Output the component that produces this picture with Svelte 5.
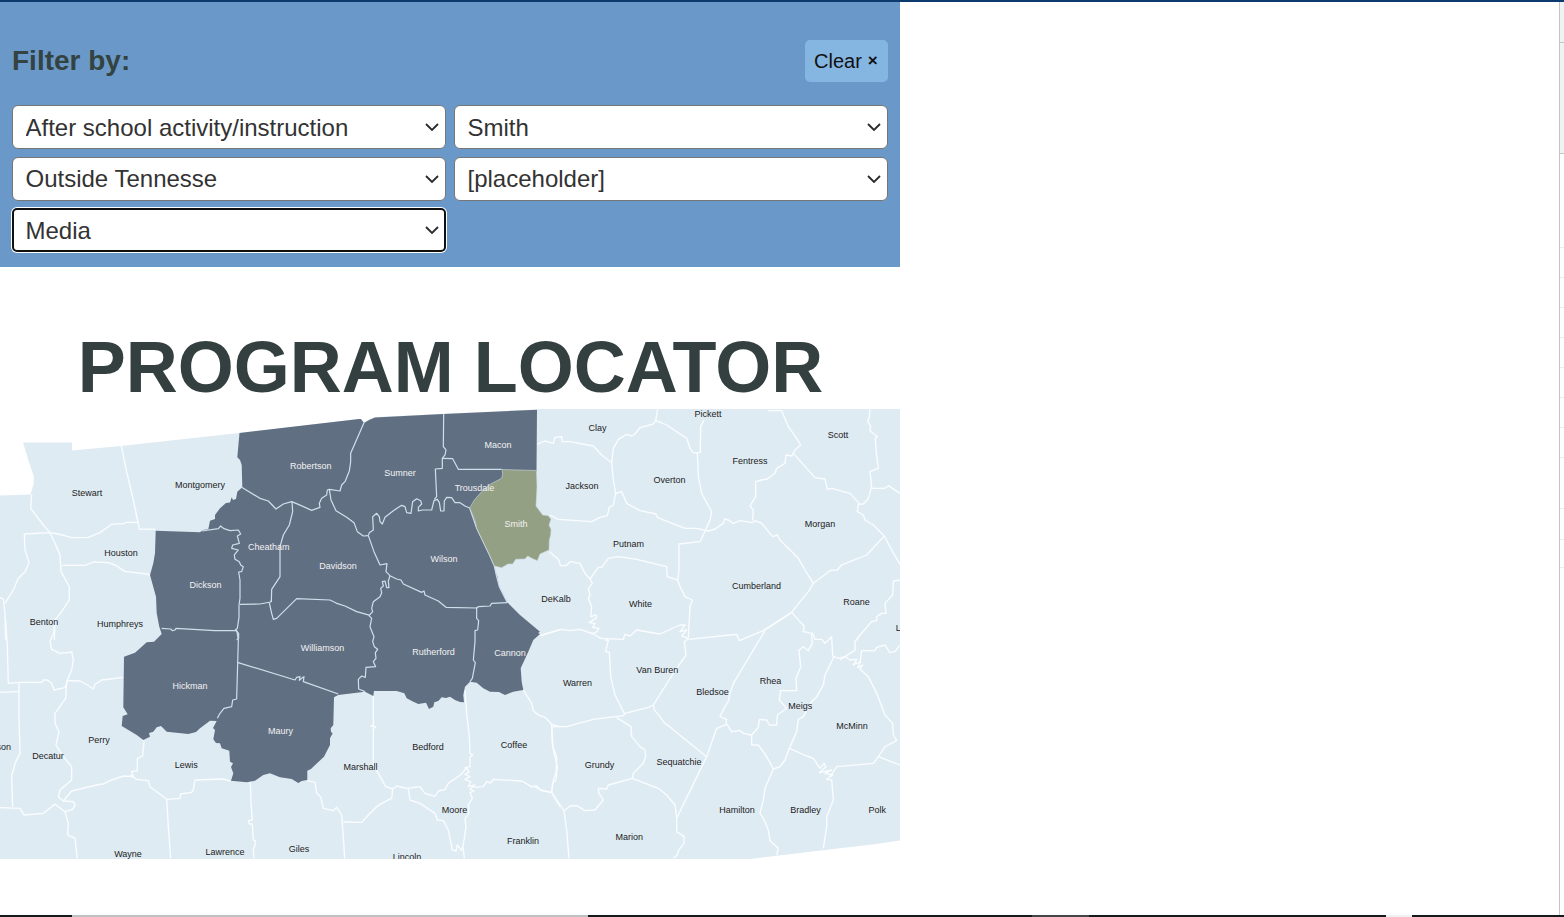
<script>
  const filters = ['After school activity/instruction', 'Smith', 'Outside Tennesse', '[placeholder]', 'Media'];

  const land = '0,495.5 30.5,494.5 33.5,484 34,477 28,459 23,442.5 72,442.5 72,450.5 121,446 239,433 359,419 364,422 375,417 441,414 537,409.5 537,409 900,409 900,840.5 876,844 750,859 0,859';

  const service = '239.5,433 359,419 361,419 364,423 369,420 375,417.5 443,414 537,409.7 536.5,471 520,540 494.3,566 495.7,573 497,575 499.3,586.7 507.3,602.3 520,615 540,631.7 538,633 540,634 533.3,640 528.3,651.7 520.7,668.3 521.7,681.7 523.3,690 513.3,691.7 505,695 499,692 490,691.7 483.3,688.3 476.7,682.7 470,681.7 465,686.7 463.3,695 464,702.3 460,702 455,700 450,696.7 446,698 441.7,697.3 438.3,701 434.3,702.3 433.3,706.7 429,709 426,702.7 418.3,704 413.3,701.7 406.7,698.3 404.3,693.3 396.7,691 374,691 373.3,696 365,691.7 338.3,695 334,697.3 333.3,725 330.7,728.3 331,732 332.7,733.3 330,738.3 330,745 324,756.7 313.3,766.7 311,769 307.3,770.7 307.3,780 301.7,781 298.3,783 295,781 291.7,779 280,777.3 270,773.3 263.3,775 255,780.7 246.7,782.3 231,780.7 233.3,773.3 231,767 233,763.3 230,761.7 229.3,750.7 221.7,748.3 220,743.3 216,743 213.3,739.3 215,730 213,728 216.7,721 210,720.7 200,728.3 196,732 188.3,734 166.7,731.7 161,726 156.7,727.3 153.3,731.7 149,733 150,736.7 143.3,740 136.7,735 121.7,726 122.7,716 127.7,714.3 123.3,707.3 124,656.7 135,652.7 146.7,642.3 154,641.7 161.7,634 159.3,626.7 156.7,613.3 156,596.7 150,575 153.3,563.3 155,553.3 155.7,530.7 200,532.3 203,530 208.3,529.3 210,520.7 215,519 215,515 220,508.3 226,503 230,502.5 231.7,497.3 233,500 236,499 237.3,491.7 242.3,487.3 241.7,465 240,460 237.3,457.3';

  const smith = '502,469.5 536.5,470.5 537,487 536,506 542.7,515 548.3,515.7 551,519.3 549,525 551,529.3 550.7,535 549.3,540 549,550 545,551.7 540,554 537.3,560.7 531.7,558.3 527.7,556 525,559 515.7,559.3 512.7,564 508,564 501.7,567.7 494.3,566 490,556 476.7,528.3 475,520 469.7,508 474.3,500 481.7,491.7 490,484.3 501.7,478.3 502.7,474';

  // Border lines are grouped by map tile, three units per pixel from the tile origin.
  const lightTiles = [
    { x: 0, y: 400, lines: [
      '95,283 92,325 130,375 150,398 165,430 180,465 183,515 208,560 208,600 185,635 165,660 163,720',
      '73,402 150,398 175,402 215,413 265,412 300,398 335,373 375,370 378,367 415,367',
      '364,138 380,215 400,300 418,387 467,388',
      '73,402 75,450 87,488 75,515 55,535 40,570 15,610',
      '0,593 10,597 15,640 17,720',
      '187,496 255,496 280,486 325,488 345,495 375,514 440,522 450,525'
    ] },
    { x: 0, y: 620, lines: [
      '17,0 22,80 25,190 60,187 125,187 130,180 142,180 155,190 162,210 195,203 203,182 240,183 262,195 280,207 285,192 295,187 305,180 370,172',
      '163,0 162,35 150,65 155,88 180,100 215,96 220,120 215,150 200,185 197,235 165,280 165,310 177,335 168,375 190,410 215,440 215,480 180,510 175,530 190,543 220,545 225,555 218,568 195,575 165,553 130,580 72,585 60,565 0,563',
      '0,217 56,215', '57,187 57,300 60,400 45,430 42,445 35,465 38,560',
      '190,543 215,513 290,495 310,492 330,482 370,468 400,470 395,455 412,452 412,415 428,408 432,365 427,358',
      '390,465 410,478 445,482 450,500 480,523 500,538 540,535 542,522 575,517 580,508 585,480 670,477 690,483',
      '500,538 505,620 512,715', '195,575 205,610 203,645 225,655 232,715'
    ] },
    { x: 220, y: 590, lines: [
      '460,318 460,405 453,408 467,411 460,416 460,525 475,550 497,590 518,597 530,588 560,595 600,590 615,610 645,619 655,603 675,598 685,580 725,552 738,535 745,535',
      '518,597 515,625 485,640 470,650 445,675 425,697 370,696',
      '262,572 285,577 290,610 302,620 310,655 340,662 350,652 365,675 370,740 374,806',
      '91,575 93,640 97,690 86,692 88,702 97,702 100,750 106,752 104,770 100,775 102,806',
      '735,300 740,370 748,440 750,490 758,495 750,502 750,530 735,533 748,545 735,553 750,560 735,568 752,575 745,590 765,585 750,598 762,603 750,608 757,625 745,645 747,670 735,685 738,710 732,750 729,770 733,806',
      '565,597 570,630 600,640 645,670 652,690 670,692 685,720 697,780 708,783 712,765 725,782 727,770',
      '762,592 790,590 800,575 812,579 820,568 905,573 935,590 950,588 962,600 995,607 1020,650',
      '910,300 935,340 940,362 955,375 975,382 995,403 997,465 1010,500 1008,550 1000,570 995,607',
      '995,403 1020,410', '960,137 1020,118'
    ] },
    { x: 530, y: 400, lines: [
      '20,133 45,123 70,130 75,112 95,110 97,125 120,125 190,138 215,165 245,188',
      '383,27 377,62 370,72 330,83 315,102 305,108 290,103 265,118 250,145 245,188 250,240 257,280 250,315 238,322 232,347 210,352 185,365 85,358 60,345',
      '377,62 410,75 470,115 480,145 490,158 502,160 505,230 515,280 545,335 540,360 528,387',
      '502,158 511,157 512,80 522,60',
      '257,280 275,275 290,310 330,332 378,342 383,353 465,385 500,385 535,393 555,387 580,370 583,357 595,360 610,370 630,362 668,368 675,362 695,370 728,410 742,405 750,420 805,475 825,510 850,550',
      '668,362 670,330 660,318 677,290 677,245 695,240 712,237 735,220 740,205 765,190 768,165 785,168 795,150 812,135 800,115 775,80 755,32 715,32',
      '790,160 855,233 885,237 892,268 905,265 960,280 990,313',
      '1020,27 1018,52 1013,62 1022,80 1020,92 1042,110 1036,115 1038,150 1045,205 1020,215 1025,260 1015,295 1000,312 985,313 982,335 1000,345 1005,360 1030,375 1063,408 1085,450 1110,493',
      '1025,265 1065,265 1075,257 1110,280',
      '1063,408 1010,465 960,485 935,495 922,510 900,512 850,550 835,575 810,605 785,637 705,690',
      '528,387 510,425 447,432 447,510 443,540 450,560 465,590 487,600 480,620 475,715',
      '443,540 412,530 410,500 320,478 265,470 235,475 215,502 205,502 180,537 165,520 150,490 120,485 108,497 92,497 85,478 58,455',
      '180,537 187,550 175,565 180,585 175,595 185,620 182,650 198,645 200,653 178,668 195,670 188,682 207,685 198,698 180,700',
      '1110,540 1090,543 1088,585 1065,610 1068,640 1055,640 1040,650 1040,662 1025,665 990,705 980,720'
    ] },
    { x: 530, y: 600, lines: [
      '32,107 95,88 120,92 150,88 190,102 212,115 280,118 285,103 300,108 320,90 390,102 450,75 465,75 450,95 470,90 455,108 475,115',
      '225,120 235,120 227,155 238,157 242,230 255,285 285,345',
      '475,115 463,125 468,165 430,220 370,315 355,322 285,340 280,347 190,358 110,380 65,380',
      '475,118 600,105 620,103 628,122 700,92 785,37',
      '705,92 610,250 597,290 597,300 582,325 570,350 590,358 587,375 560,385 530,470 440,655 440,695 462,710 462,730 445,752 442,765 430,775',
      '370,315 373,330 390,350 400,365 530,470',
      '590,372 605,395 630,392 640,400 665,405 685,382 688,358 710,360 718,375 740,375 742,345 770,325 748,300 752,272 800,272 798,235 812,200 807,150 820,140 835,152 847,130 845,100 820,95 823,78 810,65 785,37',
      '847,98 855,118 875,118 885,130 905,110 908,168 925,175 945,170 975,150 975,125 990,105',
      '912,170 885,225 880,255 860,290 845,305 820,350 805,358 800,395 778,445 765,480 750,500 730,507 705,565 700,600 690,640 700,655 715,690 720,722 745,745 740,765',
      '665,405 665,435 685,435 710,470 730,507',
      '930,180 945,170 960,180 980,178 970,195 990,185 983,203 998,195 990,208 1015,230 1040,280 1065,345 1088,370 1090,405 1100,422 1065,440 1045,470 1030,490 920,500 900,530',
      '990,190 995,152 1035,152 1040,142 1065,135 1080,158 1095,155 1110,135',
      '778,445 830,468 850,475 870,505 882,490 888,500 868,518 905,510 885,520 908,525 890,538 905,540 910,600 890,650 890,680 880,745',
      '1045,470 1110,495',
      '260,353 303,380 305,410 330,440 345,450 347,470 340,490 310,520 307,535 235,555 230,567 205,565 207,580 220,600 195,630 165,632 140,617 120,618 102,632',
      '307,535 385,565 410,585 435,615 440,655',
      '65,380 70,450 82,500 78,540 68,550 65,578 102,632 110,690 117,775', '0,560 15,560 35,572 65,578'
    ] }
  ];

  const darkTiles = [
    { x: 0, y: 400, lines: [
      '606,393 655,386 662,378 672,386 690,392 715,390 722,402 712,408 718,430 698,435 695,445 715,450 703,465 705,478 718,485 722,495 730,500 725,515 716,516 720,540 720,595 717,615 717,652 712,685 706,690 716,700 716,715 710,720',
      '485,685 512,687 517,692 525,690 528,685 645,692 708,692', '720,613 780,612 812,606 815,600'
    ] },
    { x: 230, y: 400, lines: [
      '35,262 90,295 115,303 138,327 160,312 185,305 205,313 245,331 270,322 268,310 275,295 290,285 292,270 298,268',
      '402,68 362,160 362,185 358,213 345,245 335,255 330,273 298,268 303,300 318,332 350,352 372,368 382,395 400,408 415,407',
      '415,407 418,398 430,390 428,350 440,340 448,350 450,365 457,372 465,352 490,332 515,316 525,320 530,338 543,340 548,305 560,296 572,302 575,312 565,322 565,333 577,330 605,330 612,302 622,298 628,308 632,333 642,333 643,303 650,292 665,293 675,308 690,308 705,318 719,324',
      '641,42 640,140 648,150 645,165 637,175 637,205 616,207 620,290 613,298', '637,175 668,176 685,208 815,208',
      '186,305 188,335 178,375 160,405 150,440 150,530 125,568 124,606',
      '118,609 125,640 130,658 140,655 200,596 300,600 320,610 345,618 380,635 420,646',
      '415,407 432,455 450,495 471,491 468,515 480,527 500,537 513,540 520,552 575,577 582,573 585,585 625,603 648,622 740,624 745,620 780,618 785,610 832,608',
      '480,527 475,543 477,563 470,563 465,543 457,545 460,558 452,565 455,578 450,590 430,605 425,625 428,635 417,647',
      '719,324 740,385 780,468 793,498 800,530 808,560 832,608'
    ] },
    { x: 220, y: 590, lines: [
      '447,77 455,85 450,110 462,140 458,155 463,170 473,178 466,188 468,205 460,215 467,230 438,232 436,262 425,258 415,268 416,297 435,305',
      '52,217 225,270 230,262 240,260 238,271 245,265 252,260 250,275 355,312',
      '50,120 55,150 50,327 38,330 35,350 12,355 0,370 -8,385',
      '770,52 770,85 776,92 773,120 765,122 765,155 760,210 766,218 757,265 750,275'
    ] }
  ];

  const lightLabels = [
    ['Stewart', 87, 493], ['Montgomery', 200, 485], ['Houston', 121, 553], ['Benton', 44, 622], ['Humphreys', 120, 624],
    ['Clay', 597.5, 428], ['Pickett', 708, 414], ['Scott', 838, 435], ['Fentress', 750, 461], ['Overton', 669.5, 480],
    ['Jackson', 582, 486], ['Morgan', 820, 524], ['Putnam', 628.5, 544], ['Cumberland', 756.5, 586], ['DeKalb', 556, 599],
    ['White', 640.5, 604], ['Roane', 856.5, 602], ['Loudon', 910.7, 628], ['Van Buren', 657.3, 670], ['Warren', 577.5, 683],
    ['Bledsoe', 712.5, 692], ['Rhea', 770.5, 681], ['Meigs', 800.3, 706], ['McMinn', 852, 726], ['Perry', 99, 740],
    ['Henderson', -11, 747], ['Decatur', 48, 756], ['Lewis', 186.3, 765], ['Marshall', 360.5, 767], ['Bedford', 428, 747],
    ['Coffee', 514, 745], ['Grundy', 599.5, 765], ['Sequatchie', 679, 762], ['Moore', 454.5, 810], ['Hamilton', 737, 810],
    ['Bradley', 805.5, 810], ['Polk', 877.3, 810], ['Wayne', 128, 854], ['Lawrence', 225, 852], ['Giles', 299, 849],
    ['Lincoln', 407, 857], ['Franklin', 523, 841], ['Marion', 629.3, 837]
  ];
  const darkLabels = [
    ['Robertson', 310.7, 466], ['Sumner', 400, 473], ['Macon', 498, 445], ['Trousdale', 474.5, 488], ['Smith', 516, 524],
    ['Cheatham', 268.7, 547], ['Davidson', 338, 566], ['Wilson', 444, 559], ['Dickson', 205.5, 585], ['Williamson', 322.5, 648],
    ['Rutherford', 433.5, 652], ['Cannon', 510, 653], ['Hickman', 190, 686], ['Maury', 280.5, 731]
  ];

  const rules = [42, 153, 247, 277, 307, 337, 367, 397, 427, 457, 508, 539, 567];
  const strip = [[72, '#17181a'], [516, '#c0c0c0'], [444, '#17181a'], [57, '#454545'], [297, '#17181a'], [26, '#f1f1f1'], [152, '#17181a']];
</script>

{#snippet borders(tiles, kind)}
  {#each tiles as tile}
    <g class={kind} transform={`translate(${tile.x} ${tile.y}) scale(0.33333)`}>
      {#each tile.lines as points}<polyline {points} />{/each}
    </g>
  {/each}
{/snippet}

<div class="page">
  <div class="topline"></div>
  <div class="body">
    <main>
      <section class="filters">
        <header>
          <h2>Filter by:</h2>
          <button><span>Clear</span><b>×</b></button>
        </header>
        <div class="grid">
          {#each filters as name, i}
            <label class="field" class:active={i === 4}>
              <select><option>{name}</option></select>
              <svg width="14" height="8" viewBox="0 0 14 8"><path d="M1 1L7 7L13 1" /></svg>
            </label>
          {/each}
        </div>
      </section>
      <h1>PROGRAM LOCATOR</h1>
      <svg class="map" width="900" height="450" viewBox="0 409 900 450">
        <polygon class="land" points={land} />
        {@render borders(lightTiles, 'light')}
        <polygon class="service" points={service} />
        {@render borders(darkTiles, 'dark')}
        <polygon class="smith" points={smith} />
        {#each lightLabels as [name, x, y]}<text {x} y={y + 3}>{name}</text>{/each}
        {#each darkLabels as [name, x, y]}<text class="on-dark" {x} y={y + 3}>{name}</text>{/each}
      </svg>
    </main>
    <aside>
      {#each rules as y, i}
        <div class="cell" class:head={i < 2} style:height={`${y - (i ? rules[i - 1] : 1)}px`}></div>
      {/each}
    </aside>
  </div>
  <div class="strip">
    {#each strip as [w, color]}<i style:width={`${w}px`} style:background={color}></i>{/each}
  </div>
</div>

<style>
  :global(body) { margin: 0; background: #fff; }
  .page { width: 1564px; height: 917px; overflow: hidden; display: flex; flex-direction: column; font-family: "Liberation Sans", Arial, sans-serif; }
  .topline { height: 2px; background: #0c3a6f; flex: none; }
  .body { flex: 1; min-height: 0; display: flex; justify-content: space-between; }
  main { width: 900px; }
  .filters { box-sizing: border-box; height: 265px; padding: 38px 12px 0; background: #6a99c9; }
  header { display: flex; justify-content: space-between; align-items: center; height: 42px; }
  h2 { margin: 0; font-size: 28px; line-height: 42px; color: #34433f; }
  button { display: flex; align-items: center; gap: 6px; width: 83px; height: 42px; padding: 0 0 0 9px; border: 0; border-radius: 5px; background: #85b5e1; color: #111; font: 20px "Liberation Sans", Arial, sans-serif; }
  button b { font-size: 17px; line-height: 20px; padding-bottom: 1px; }
  .grid { margin-top: 23px; display: grid; grid-template-columns: 434px 434px; column-gap: 8px; row-gap: 7.5px; }
  .field { display: grid; align-items: center; height: 44px; }
  select { grid-area: 1 / 1; box-sizing: border-box; width: 434px; height: 44px; padding: 0 12.5px; appearance: none; border: 1px solid #767676; border-radius: 6px; background: #fff; color: #333; font: 24px "Liberation Sans", Arial, sans-serif; opacity: 1; }
  .field svg { grid-area: 1 / 1; justify-self: end; margin-right: 7px; fill: none; stroke: #2a2a2a; stroke-width: 1.8; z-index: 1; }
  .active select { border: 2px solid #101010; padding: 0 11.5px; border-radius: 5px; box-shadow: 0 0 0 1px #fff; }
  h1 { margin: 59px 0 0; height: 83px; line-height: 82px; font-size: 72px; color: #344040; text-align: center; text-indent: 1px; white-space: nowrap; }
  .map { display: block; overflow: hidden; }
  .land { fill: #dfebf3; }
  .service { fill: #616f82; }
  .smith { fill: #94a084; stroke: #c9d9e2; stroke-width: 0.6; }
  .light, .dark { fill: none; stroke-linejoin: round; }
  .light { stroke: #fafdff; stroke-width: 4; }
  .dark { stroke: #cfe0ec; stroke-width: 3.6; }
  text { font-size: 9px; text-anchor: middle; fill: #222; }
  .on-dark { fill: #f2f2f2; }
  aside { width: 4px; border-left: 1px solid #c4c4c4; }
  .cell { box-sizing: border-box; border-bottom: 1px solid #ececec; }
  .head { background: #f1f2f4; border-color: #c6c6c6; }
  .strip { display: flex; height: 2px; flex: none; }
</style>
